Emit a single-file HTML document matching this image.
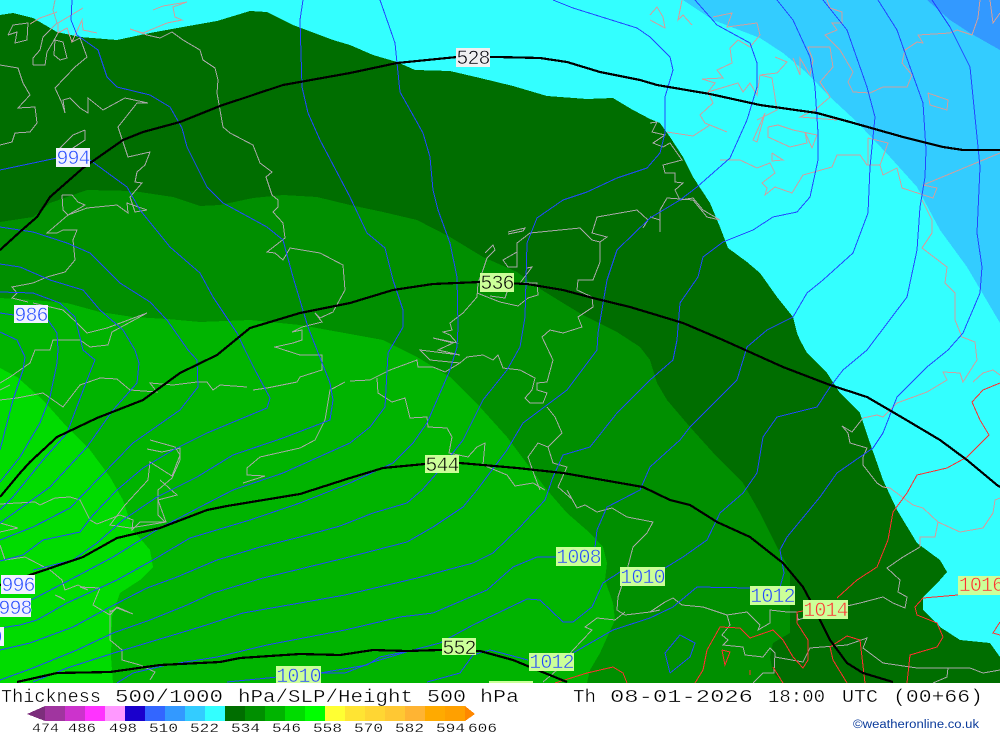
<!DOCTYPE html>
<html><head><meta charset="utf-8"><title>Thickness 500/1000 hPa</title>
<style>
html,body{margin:0;padding:0;background:#fff;width:1000px;height:733px;overflow:hidden}
svg{display:block}
.b polyline{fill:none;stroke:#2248ff;stroke-width:1}
.k polyline{fill:none;stroke:#000;stroke-width:2.2}
.g polyline{fill:none;stroke:#a8a8a8;stroke-width:1}
.p polyline{fill:none;stroke:#cf9f9f;stroke-width:1}
.r polyline{fill:none;stroke:#ff3030;stroke-width:1}
.l text{font:20px "Liberation Mono",monospace;text-anchor:middle;letter-spacing:-.9px;stroke-width:.55px}
.lg text{stroke:#ccff99}
.lw text{stroke:#f2f2ff}
.t text{font:18px "Liberation Mono",monospace;fill:#000;stroke:#fff;stroke-width:.35px}
.s text{font:13px "Liberation Mono",monospace;fill:#000;stroke:#fff;stroke-width:.2px}
</style></head><body>
<svg width="1000" height="733" viewBox="0 0 1000 733" xmlns="http://www.w3.org/2000/svg">
<svg x="0" y="0" width="1000" height="683" viewBox="0 0 1000 683">
<g shape-rendering="crispEdges">
<rect width="1000" height="683" fill="#33ffff"/>
<polygon fill="#33ccff" points="683,0 713,20 760,38 783,53 807,73 830,97 857,122 890,157 917,187 940,230 967,267 1000,323 1000,0"/>
<polygon fill="#3399ff" points="927,0 950,20 970,33 1000,50 1000,0"/>
<polygon fill="#006e00" points="0,15 13,13 33,18 57,32 80,37 117,40 150,33 183,27 217,21 250,11 267,12 293,25 333,40 350,45 373,55 397,62 415,70 450,71 480,78 513,86 547,96 587,99 613,98 633,110 650,119 660,123 670,137 683,157 693,177 710,203 720,227 728,248 747,262 760,273 777,297 793,317 797,333 800,340 807,353 827,373 840,393 860,413 870,443 883,480 897,510 917,543 940,560 947,572 940,580 923,597 923,610 940,627 960,640 990,643 1000,657 1000,683 0,683"/>
<polygon fill="#008f00" points="0,222 33,217 50,203 87,190 133,191 173,197 200,206 220,205 253,198 283,195 317,197 350,205 383,212 417,220 450,237 483,257 517,272 537,287 563,303 583,315 617,332 640,347 650,360 657,383 667,400 690,427 717,457 743,483 760,513 777,547 790,570 790,633 773,643 770,657 773,673 783,683 0,683"/>
<polygon fill="#00b400" points="0,298 33,300 67,303 100,312 133,317 167,319 200,322 250,320 300,325 350,334 383,340 417,357 450,377 480,407 507,437 537,477 547,490 567,513 590,533 603,547 607,563 605,580 613,603 615,620 600,653 590,670 587,683 0,683"/>
<polygon fill="#00dc00" points="0,368 17,377 43,400 67,427 90,450 110,477 123,500 133,530 150,550 153,567 140,580 120,593 112,617 111,657 113,683 0,683"/>
</g>
<g shape-rendering="crispEdges">
<g class="g">
<polyline points="147,35 160,38 172,32 183,40 200,50 203,60 215,68 218,80 217,93 223,127 230,133 253,145 260,163 272,172 266,177 272,195 278,200 278,207 273,212 283,223 285,238 267,252 275,253 283,260 290,248 320,253 343,265 345,290 333,312 320,318 315,313 322,322 302,327 292,332 302,330 302,340 293,343 275,347 300,355 322,355 322,370 300,377 297,382 267,388 253,390"/>
<polyline points="345,382 330,390 325,420 315,440 300,448 260,457 247,468 247,475 265,476 243,483"/>
<polyline points="0,400 17,398 43,393 63,407 80,385 100,378 117,379 130,390 157,392 150,383 173,385 197,382 207,382 213,390 220,385 247,387"/>
<polyline points="0,383 10,377 20,370 30,363 35,350 50,350 53,340 80,340 90,347 108,345 112,332 147,313 107,328 87,333 77,323 63,310 33,303"/>
<polyline points="0,65 18,68 23,83 30,95 18,108 35,107 37,123 30,132 15,133 12,142 0,145"/>
<polyline points="33,65 33,58 40,50 43,37 57,23 53,10 55,0"/>
<polyline points="33,65 45,65 47,52 53,42 58,33 67,28 72,42 80,38 87,57 75,67 55,88 62,103 65,113 63,100 70,98 80,108 88,113 88,98 103,110 125,98 148,103 137,103 118,127 128,157 150,152 145,165 137,172 135,182 142,183 130,197 135,212 147,210"/>
<polyline points="85,130 85,140 70,150 60,148 73,135 85,130"/>
<polyline points="62,195 72,195 78,202 85,205 68,215 63,210 62,195"/>
<polyline points="68,215 87,208 117,205 128,213 127,203 147,210"/>
<polyline points="68,215 47,233 57,233 63,230 77,230 73,240 75,260 65,272 47,277 33,283 12,287 17,293 12,298 28,302"/>
<polyline points="55,40 63,42 67,58 60,60 54,55 55,40"/>
<polyline points="8,35 13,25 28,23 27,40 15,43 17,32 8,35"/>
<polyline points="10,385 0,390"/>
<polyline points="150,440 175,447 180,455 172,476 150,462 148,480 125,505 110,525 130,528 166,522 158,500 177,495 160,480"/>
<polyline points="147,449 162,452 180,448 180,460 172,478 158,490 158,515 165,522"/>
<polyline points="0,504 35,502 40,505 55,498 70,497 80,500 90,520 97,524 120,515 133,520 132,530 140,522 165,522"/>
<polyline points="0,523 18,528 0,532"/>
<polyline points="0,545 5,560 25,557 50,570 62,580 65,590 78,585 88,590 80,587 100,588 95,600 93,605 110,615 117,607 133,614"/>
<polyline points="55,595 65,600 60,597 55,595"/>
<polyline points="110,610 110,640 122,650 122,660 140,665 155,672 150,680"/>
<polyline points="110,612 117,608 133,614"/>
<polyline points="485,253 493,245 495,250 487,258 483,270 478,283 477,297 463,313 450,323 452,330 443,332 450,335 457,343 433,338 453,343 438,350 460,355 420,350 430,360 460,363 467,357 483,355 493,360 498,355 503,368 520,370 535,378 532,390 525,398 530,403 543,403 547,393 537,390 537,383 547,382 553,360 542,337 550,330 563,333 582,327 578,317 593,307 592,297 577,290 578,280 593,280 600,262 600,242 607,237 592,233 597,217 637,210 648,220 643,228"/>
<polyline points="508,232 525,228 523,231 508,234"/>
<polyline points="517,252 503,260 508,267 517,267 517,243 530,233 580,228 592,240 600,242"/>
<polyline points="527,268 532,267 520,283 537,283 538,295 528,298 518,306 500,302 477,293"/>
<polyline points="500,290 510,283 505,298 490,296"/>
<polyline points="350,381 370,380 390,370 417,360 418,367 433,367 445,372 460,363"/>
<polyline points="377,378 378,393 392,402 405,398 410,418 427,417 428,427 447,428 452,437 449,453 468,457 477,447 485,443 483,465 507,475 515,486 533,483 545,490"/>
<polyline points="547,407 555,417 562,433 548,447 553,463 567,467 558,487 573,500"/>
<polyline points="548,447 538,443 528,457 535,477 540,490"/>
<polyline points="567,490 577,508 585,505 597,512 612,508 627,517 653,522 647,533 633,547 627,570 618,597 617,610 625,615 650,612 660,610"/>
<polyline points="625,612 615,620 597,618 585,627 592,630 573,650 557,670 543,682"/>
<polyline points="650,612 665,602 673,598 682,605 703,607 727,615 747,612 760,625 758,630 770,623 770,610 787,612 797,612 798,620 817,613 860,603 883,597 893,603 905,608 907,597 898,592 900,580 887,568 903,557 920,547"/>
<polyline points="727,615 730,625 722,635 728,640 723,645 743,647 745,655 763,657 770,648 775,653 774,673 763,673 753,683"/>
<polyline points="775,657 803,662 810,648 847,645 867,638 863,648 883,663 917,668 970,668 983,673 1000,670"/>
<polyline points="948,668 947,677 933,683"/>
<polyline points="863,418 852,432 842,426 848,433 850,443 867,448 863,457 863,465 877,483 883,487"/>
<polyline points="650,123 657,122 652,132 665,135 653,143 663,147 670,143 682,160 663,165 665,173 675,173 675,182 683,183 675,190 680,200 693,198 703,210 720,220 707,217 693,200 667,198 660,210 660,232 660,220 650,217"/>
</g>
<g class="p">
<polyline points="83,8 58,23 58,33 67,28 72,42 82,20 83,30 97,33"/>
<polyline points="57,12 40,18 30,24"/>
<polyline points="153,10 163,6 187,2 173,7 175,17 182,20 167,23 143,33 130,29 147,35"/>
<polyline points="827,0 830,8 842,12 842,23 832,23 837,30 825,35 840,50 853,72 848,82 853,92 870,93 883,87 907,87 912,75 902,63 905,50 917,42 923,43 918,35 950,33 957,30 972,35 978,18 980,0"/>
<polyline points="990,0 993,23 1000,13"/>
<polyline points="928,93 948,100 947,110 930,105 928,93"/>
<polyline points="713,17 732,13 727,27 757,23 760,35 750,47 738,40 730,48 732,63 717,70 723,78 702,79 715,83 708,92 713,103 700,115 705,123 727,132 710,125 693,136 667,132"/>
<polyline points="708,92 738,83 743,92 750,83 757,95 760,75 772,78 777,110 757,120"/>
<polyline points="775,57 787,62 777,73 760,75"/>
<polyline points="793,58 800,75 800,58 810,75 813,60 808,47 830,47 833,67 820,82 830,97 815,110 800,117 837,120"/>
<polyline points="765,113 753,140 757,142 765,113"/>
<polyline points="768,127 778,125 793,130 817,135 812,148 805,132 807,143 790,147 768,137 768,127"/>
<polyline points="720,160 740,160 757,168 770,163 775,173 762,183 767,188 765,195 775,187 792,193 803,175 832,167 837,155 860,155 867,165 880,165 883,175 897,168 902,188 933,198 937,188 923,185 1000,153"/>
<polyline points="772,153 783,160 772,161 772,153"/>
<polyline points="922,200 932,220 932,233 922,248 947,267 945,283 955,293 955,320 962,337 975,342 977,360 963,382 960,373 943,372 947,380 927,392 897,403 883,417 877,415 863,418"/>
<polyline points="868,138 888,143 880,165 868,165 868,138"/>
<polyline points="650,15 657,7 663,17 665,28 650,20"/>
<polyline points="682,0 678,20 683,15 692,25"/>
<polyline points="973,382 983,373 993,370 1000,375"/>
<polyline points="883,487 890,488 913,505 923,508 938,522 960,532 983,528 993,513 995,500 1000,498"/>
<polyline points="920,547 920,537 935,537 938,522"/>
</g>
<g class="b">
<polyline points="72,0 71,20 77,35 98,50 107,77 117,87 150,95 170,107 182,128 187,147 207,187 223,203 267,227 283,240 293,277 308,327 317,350 330,383 333,400 330,420 283,438 233,455 197,477 157,497 123,520 97,543 73,560 33,570"/>
<polyline points="303,0 300,20 302,87 308,113 320,140 350,197 367,233 385,248 393,280 403,310 403,327 388,353 385,407 370,427 350,443 283,473 233,490 200,507 160,528 113,557 83,573 37,597 31,600"/>
<polyline points="380,0 395,43 397,63 400,92 423,133 430,157 433,190 438,210 450,243 457,277 458,327 457,347 450,370 427,423 413,443 393,463 350,483 300,503 250,520 190,538 153,560 117,580 67,603 37,620 20,625 0,628"/>
<polyline points="553,0 573,8 637,28 650,37 670,57 673,70 665,97 665,133 660,153 647,168 617,178 587,192 563,200 537,218 527,243 525,317 520,347 507,370 483,400 463,440 437,473 422,490 407,503 373,513 340,526 300,537 260,547 217,560 177,577 147,588 110,607 73,627 30,643 0,650"/>
<polyline points="695,0 717,25 750,43 757,63 757,87 747,120 730,158 697,187 680,200 650,218 617,250 607,280 598,333 597,350 567,390 543,408 523,423 507,450 477,490 463,507 433,527 407,542 345,558 263,578 213,593 187,605 150,620 113,633 77,650 33,668 0,680"/>
<polyline points="777,0 793,20 810,57 815,87 818,133 818,160 810,197 797,212 773,217 753,230 723,242 703,257 698,277 680,303 677,340 673,360 650,380 617,413 590,447 563,455 553,477 545,500 520,527 493,553 473,563 417,578 345,595 300,603 243,613 200,627 150,642 117,652 67,668 33,682"/>
<polyline points="823,0 847,30 867,87 875,117 870,167 868,213 853,253 823,280 807,293 793,317 767,330 747,347 737,380 690,427 680,440 650,467 640,490 607,507 597,530 595,547"/>
<polyline points="557,557 537,557 513,567 487,590 433,613 400,617 345,630 267,645 217,657 167,665 133,673 117,683"/>
<polyline points="878,0 897,30 910,67 923,103 926,150 925,177 920,207 917,250 907,297 867,350 843,370 830,387 817,407 777,417 763,437 757,473 743,493 720,513 707,540 683,557 665,568"/>
<polyline points="620,572 603,583 592,607 573,622 563,622 540,600 527,599 473,625 440,643 413,650 373,662 345,673 320,673 298,675 227,682"/>
<polyline points="320,673 367,665 380,657 413,650"/>
<polyline points="932,0 950,27 970,67 975,117 980,167 977,233 982,267 980,293 963,333 948,350 927,367 897,397 883,433 873,448 837,473 820,497 787,537 780,550 784,573 780,587 750,588 697,587 673,607 650,618 613,630 573,653"/>
<polyline points="528,660 490,650 473,655 460,673 427,682"/>
<polyline points="670,673 665,653 680,635 695,643 690,657 670,673"/>
<polyline points="0,170 57,158 90,160 127,187 140,210 170,247 200,273 213,297 237,333 245,350 255,370 270,398 267,408 243,418 207,433 173,450 143,468 117,490 93,515 80,532 43,540 23,555 0,561"/>
<polyline points="0,227 33,232 67,243 90,253 120,283 150,302 167,320 188,350 197,360 198,387 180,410 133,443 100,477 70,508 33,527 0,540"/>
<polyline points="0,264 20,267 50,280 83,290 100,310 123,330 135,350 139,363 137,383 113,410 87,447 50,487 0,523"/>
<polyline points="0,292 33,293 60,303 75,317 83,350 95,360 87,380 67,433 43,460 13,497 0,510"/>
<polyline points="0,313 48,320 57,333 58,350 57,363 50,397 40,423 20,457 0,482"/>
<polyline points="0,332 17,340 25,357 23,370 13,400 0,450"/>
</g>
<g class="r">
<polyline points="1000,383 983,390 972,402 980,420 989,435 967,457 947,468 917,475 907,493 893,512 888,540 877,567 857,580 837,598"/>
<polyline points="803,611 797,612 797,623 808,640 808,660 803,668 793,657 783,640 773,630 750,638 740,628 720,627 707,650 703,670 695,683"/>
<polyline points="555,683 587,673 613,667 623,673 627,683"/>
<polyline points="722,650 730,652 725,665 722,650"/>
<polyline points="958,595 923,598 915,607 917,615 937,623 943,637 937,647 910,655 907,683"/>
<polyline points="865,683 860,640 847,636 830,647 833,660 847,683"/>
<polyline points="773,667 783,683"/>
<polyline points="750,670 750,675"/>
<polyline points="1000,622 993,633 1000,635"/>
</g>
<g class="k">
<polyline points="0,250 22,230 37,217 50,197 83,168 123,140 143,132 180,122 220,106 283,85 350,73 397,63 457,57 497,57 540,58 567,62 600,72 640,80 657,85 710,94 760,105 817,113 850,122 903,137 943,147 963,150 1000,150"/>
<polyline points="0,497 20,473 30,462 57,437 97,418 143,400 180,373 217,355 250,328 300,313 350,303 393,290 433,284 480,282 527,284 563,290 593,298 630,307 650,313 683,323 723,340 783,367 830,385 867,397 903,418 940,440 967,460 997,485 1000,487"/>
<polyline points="0,585 30,575 83,557 117,538 160,528 207,510 227,506 300,494 350,478 383,468 425,464 460,463 517,468 563,473 643,487 670,500 690,505 717,522 750,537 783,563 803,587 810,600 820,620 830,640 847,663 863,673 893,682"/>
<polyline points="17,682 57,673 110,672 160,665 220,662 240,658 300,654 340,655 373,650 407,651 440,650 480,651 513,660 530,667 567,682"/>
</g>
<g>
<rect x="56" y="148" width="34" height="19" fill="#f2f2ff"/>
<rect x="14" y="305" width="34" height="18" fill="#f2f2ff"/>
<rect x="456" y="48" width="34" height="19" fill="#f0f0f0"/>
<rect x="480" y="273" width="34" height="19" fill="#ccff99"/>
<rect x="425" y="455" width="34" height="18" fill="#ccff99"/>
<rect x="442" y="638" width="34" height="17" fill="#ccff99"/>
<rect x="556" y="547" width="45" height="19" fill="#ccff99"/>
<rect x="620" y="567" width="45" height="19" fill="#ccff99"/>
<rect x="529" y="653" width="45" height="18" fill="#ccff99"/>
<rect x="750" y="586" width="45" height="19" fill="#ccff99"/>
<rect x="803" y="600" width="45" height="19" fill="#ccff99"/>
<rect x="958" y="576" width="42" height="19" fill="#ccff99"/>
<rect x="276" y="666" width="45" height="17" fill="#ccff99"/>
<rect x="1" y="575" width="34" height="19" fill="#f2f2ff"/>
<rect x="0" y="598" width="31" height="19" fill="#f2f2ff"/>
<rect x="0" y="627" width="4" height="19" fill="#f2f2ff"/>
<rect x="489" y="681" width="44" height="2" fill="#ccff99"/>
</g>
</g>
<g class="l lw" fill="#2248ff">
<text x="73" y="164">994</text>
<text x="31" y="321">986</text>
<text x="18" y="591">996</text>
<text x="15" y="614">998</text>
<text x="-4" y="643">0</text>
</g>
<g class="l lg" fill="#2248ff">
<text x="578.5" y="563">1008</text>
<text x="642.5" y="583">1010</text>
<text x="551.5" y="668">1012</text>
<text x="772.5" y="602">1012</text>
<text x="298.5" y="682">1010</text>
</g>
<g class="l lw" fill="#000">
<text x="473" y="64">528</text>
</g>
<g class="l lg" fill="#000">
<text x="497" y="289">536</text>
<text x="442" y="471">544</text>
<text x="459" y="654">552</text>
</g>
<g class="l lg" fill="#ff3030">
<text x="825.5" y="616">1014</text>
<text x="981" y="591">1016</text>
</g>
</svg>
<g class="t">
<text x="1" y="702" textLength="100" lengthAdjust="spacingAndGlyphs">Thickness</text>
<text x="115" y="702" textLength="108" lengthAdjust="spacingAndGlyphs">500/1000</text>
<text x="238" y="702" textLength="175" lengthAdjust="spacingAndGlyphs">hPa/SLP/Height</text>
<text x="427" y="702" textLength="39" lengthAdjust="spacingAndGlyphs">500</text>
<text x="480" y="702" textLength="39" lengthAdjust="spacingAndGlyphs">hPa</text>
<text x="573" y="702" textLength="23" lengthAdjust="spacingAndGlyphs">Th</text>
<text x="610" y="702" textLength="143" lengthAdjust="spacingAndGlyphs">08-01-2026</text>
<text x="768" y="702" textLength="57" lengthAdjust="spacingAndGlyphs">18:00</text>
<text x="842" y="702" textLength="36" lengthAdjust="spacingAndGlyphs">UTC</text>
<text x="893" y="702" textLength="90" lengthAdjust="spacingAndGlyphs">(00+66)</text>
</g>
<g shape-rendering="crispEdges">
<polygon points="27,714 45,706 45,721" fill="#7c2e7c"/>
<rect x="45" y="706" width="20" height="15" fill="#a0359f"/>
<rect x="65" y="706" width="20" height="15" fill="#cc33cc"/>
<rect x="85" y="706" width="20" height="15" fill="#ff33ff"/>
<rect x="105" y="706" width="20" height="15" fill="#ff99ff"/>
<rect x="125" y="706" width="20" height="15" fill="#1a00cc"/>
<rect x="145" y="706" width="20" height="15" fill="#3366ff"/>
<rect x="165" y="706" width="20" height="15" fill="#3399ff"/>
<rect x="185" y="706" width="20" height="15" fill="#33ccff"/>
<rect x="205" y="706" width="20" height="15" fill="#33ffff"/>
<rect x="225" y="706" width="20" height="15" fill="#006e00"/>
<rect x="245" y="706" width="20" height="15" fill="#008f00"/>
<rect x="265" y="706" width="20" height="15" fill="#00b400"/>
<rect x="285" y="706" width="20" height="15" fill="#00dc00"/>
<rect x="305" y="706" width="20" height="15" fill="#00ff00"/>
<rect x="325" y="706" width="20" height="15" fill="#ffff33"/>
<rect x="345" y="706" width="20" height="15" fill="#ffe433"/>
<rect x="365" y="706" width="20" height="15" fill="#ffd633"/>
<rect x="385" y="706" width="20" height="15" fill="#ffc833"/>
<rect x="405" y="706" width="20" height="15" fill="#ffb433"/>
<rect x="425" y="706" width="20" height="15" fill="#ffaa00"/>
<rect x="445" y="706" width="20" height="15" fill="#ffa000"/>
<polygon points="465,706 475,714 465,721" fill="#ff8800"/>
</g>
<g class="s">
<text x="32" y="732" textLength="27" lengthAdjust="spacingAndGlyphs">474</text>
<text x="68" y="732" textLength="28" lengthAdjust="spacingAndGlyphs">486</text>
<text x="109" y="732" textLength="28" lengthAdjust="spacingAndGlyphs">498</text>
<text x="149" y="732" textLength="29" lengthAdjust="spacingAndGlyphs">510</text>
<text x="190" y="732" textLength="29" lengthAdjust="spacingAndGlyphs">522</text>
<text x="231" y="732" textLength="29" lengthAdjust="spacingAndGlyphs">534</text>
<text x="272" y="732" textLength="29" lengthAdjust="spacingAndGlyphs">546</text>
<text x="313" y="732" textLength="29" lengthAdjust="spacingAndGlyphs">558</text>
<text x="354" y="732" textLength="29" lengthAdjust="spacingAndGlyphs">570</text>
<text x="395" y="732" textLength="29" lengthAdjust="spacingAndGlyphs">582</text>
<text x="436" y="732" textLength="29" lengthAdjust="spacingAndGlyphs">594</text>
<text x="468" y="732" textLength="29" lengthAdjust="spacingAndGlyphs">606</text>
</g>
<text x="853" y="728" font-family="'Liberation Sans',sans-serif" font-size="11.5" fill="#0a3a9a" textLength="126" lengthAdjust="spacingAndGlyphs">©weatheronline.co.uk</text>
</svg>
</body></html>
